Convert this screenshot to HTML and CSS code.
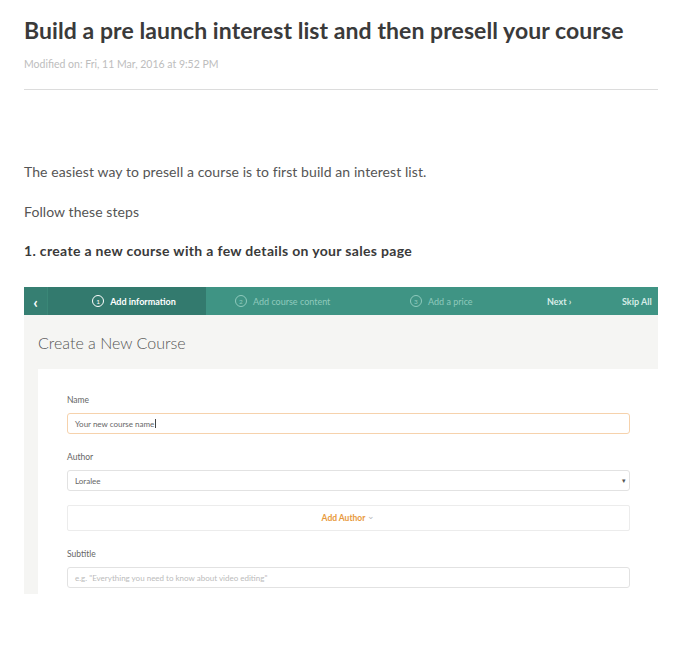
FILE: index.html
```html
<!DOCTYPE html>
<html>
<head>
<meta charset="utf-8">
<link rel="stylesheet" href="styles.css">
</head>
<body>
<div class="page">
  <h1 class="title">Build a pre launch interest list and then presell your course</h1>
  <div class="meta">Modified on: Fri, 11 Mar, 2016 at 9:52 PM</div>
  <hr class="rule">
  <p class="para first">The easiest way to presell a course is to first build an interest list.</p>
  <p class="para">Follow these steps</p>
  <p class="para strong">1. create a new course with a few details on your sales page</p>

  <div class="shot">
    <div class="nav">
      <div class="back">&#8249;</div>
      <div class="tab active"><span class="num">1</span>Add information</div>
      <div class="tab t2"><span class="num">2</span>Add course content</div>
      <div class="tab t3"><span class="num">3</span>Add a price</div>
      <div class="next">Next ›</div>
      <div class="skip">Skip All</div>
    </div>
    <div class="body">
      <div class="heading">Create a New Course</div>
      <div class="card">
        <div class="label">Name</div>
        <div class="input focus">Your new course name<span class="caret"></span></div>
        <div class="label">Author</div>
        <div class="input select">Loralee<span class="arrow">▾</span></div>
        <div class="addauthor">Add Author <span class="chev">⌄</span></div>
        <div class="label">Subtitle</div>
        <div class="input ph">e.g. "Everything you need to know about video editing"</div>
      </div>
    </div>
  </div>
</div>
</body>
</html>
```

FILE: styles.css
```css
html, body { margin: 0; padding: 0; background: #fff; }
body { font-family: "Lato", "Open Sans", sans-serif; color: #555; }
.page { padding: 0 22px 0 24px; }
.title {
  margin: 0; padding-top: 16px;
  font-size: 23px; font-weight: 700; color: #3a3a3a; line-height: 28px;
  letter-spacing: 0.07px; white-space: nowrap;
}
.meta { margin-top: 13px; font-size: 10.5px; color: #bdbdbd; line-height: 14px; }
.rule { margin: 18px 0 0; border: 0; border-top: 1px solid #dcdcdc; width: 634px; }
.para { margin: 0; font-size: 14px; line-height: 18px; color: #555; letter-spacing: 0.08px; }
.para.first { margin-top: 73px; }
.para + .para { margin-top: 22px; }
.para.strong { font-weight: 700; color: #3a3a3a; margin-top: 21px; letter-spacing: 0.33px; }

.shot { margin-top: 27px; width: 634px; height: 307px; overflow: hidden; background: #f5f5f3; }
.nav { display: flex; height: 28px; background: #3f9484; color: #fff; font-size: 9px; align-items: stretch; }
.nav > div { display: flex; align-items: center; white-space: nowrap; flex-shrink: 0; }
.back { width: 24px; justify-content: center; background: #367f72; font-size: 16px; font-weight: 700; border-right: 1px solid #3a8777; box-sizing: border-box; }
.tab { gap: 6px; color: #8fcabd; }
.tab.active { width: 158px; background: #337a6e; color: #fff; font-weight: 700; justify-content: center; padding-left: 14px; box-sizing: border-box; }
.t2 { width: 176px; padding-left: 29px; box-sizing: border-box; }
.t3 { width: 144px; padding-left: 28px; box-sizing: border-box; }
.num {
  width: 10px; height: 10px; border: 1px solid currentColor; border-radius: 50%;
  display: inline-flex; align-items: center; justify-content: center; font-size: 6.5px; font-weight: 400;
}
.next { width: 80px; padding-left: 21px; box-sizing: border-box; font-weight: 700; color: #d6ece7; }
.skip { font-weight: 700; color: #d6ece7; padding-left: 16px; }

.body { padding: 0 0 0 14px; }
.heading { font-size: 16px; color: #555; line-height: 20px; padding-top: 18px; height: 36px; box-sizing: content-box; font-weight: 300; }
.card { background: #fff; padding: 25px 28px 6px 29px; height: 300px; }
.label { font-size: 8.5px; color: #666; line-height: 12px; margin-bottom: 7px; }
.input {
  height: 21px; border: 1px solid #e2e2e2; border-radius: 3px; box-sizing: border-box;
  font-size: 8px; color: #666; display: flex; align-items: center; padding-left: 7px; margin-bottom: 17px;
}
.input.focus { border-color: #f6d2ac; }
.caret { display: inline-block; width: 1px; height: 9px; background: #444; margin-left: 1px; }
.select { justify-content: space-between; padding-right: 3px; }
.arrow { font-size: 7px; color: #555; }
.ph { color: #bbb; }
.addauthor {
  height: 26px; border: 1px solid #ececec; border-radius: 2px; box-sizing: border-box;
  display: flex; align-items: center; justify-content: center; font-size: 8.5px; font-weight: 700; color: #e8993c;
  margin-top: -3px; margin-bottom: 17px;
}
.chev { font-weight: 400; color: #bbb; margin-left: 2px; position: relative; top: -2px; }
```
